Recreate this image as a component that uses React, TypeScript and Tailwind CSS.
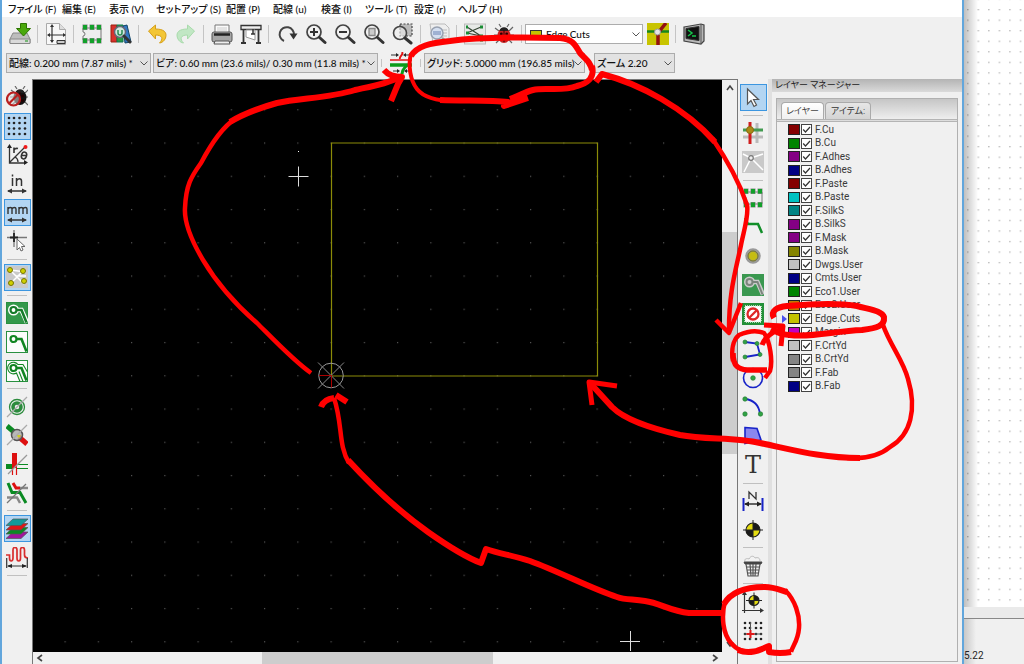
import type { ReactNode } from "react";

const UI_FONT = "font-['Roboto','Noto_Sans_CJK_JP',sans-serif]";
const BAR_FONT = "font-['Lato','Noto_Sans_CJK_JP',sans-serif]";

function Icon({ children }: { children: ReactNode }) {
  return (
    <svg viewBox="0 0 22 22" className="size-[22px] shrink-0" fill="none" stroke="#333" strokeWidth="1.5" aria-hidden="true">
      {children}
    </svg>
  );
}

function Bug({ color = "#c62222" }: { color?: string }) {
  return (
    <g>
      <path d="M2 5l4 3M20 4l-4 4M1 12h4M21 12h-4M3 20l4-4M19 20l-4-4M8 4L6 1M14 4l2-3" stroke="#666" strokeWidth="1.2" />
      <ellipse cx="11" cy="12.500" rx="6.500" ry="7.500" fill={color} stroke="none" />
      <path d="M6.500 8a4.600 4.600 0 0 1 9 0z" fill="#222" stroke="none" />
      <path d="M11 7v12" stroke="#300" strokeWidth="1" />
      <circle cx="8.300" cy="11" r="1.400" fill="#200" stroke="none" />
      <circle cx="13.700" cy="11" r="1.400" fill="#200" stroke="none" />
      <circle cx="8.500" cy="15.500" r="1.400" fill="#200" stroke="none" />
      <circle cx="13.500" cy="15.500" r="1.400" fill="#200" stroke="none" />
    </g>
  );
}

function Lens({ children }: { children?: ReactNode }) {
  return (
    <g>
      <circle cx="9" cy="9" r="7" fill="#f4f4f4" fillOpacity=".6" stroke="#444" strokeWidth="1.700" />
      <path d="M14.500 14.500l5.500 5" stroke="#333" strokeWidth="3" strokeLinecap="round" />
      {children}
    </g>
  );
}

function Module() {
  return (
    <g>
      <path d="M2 5h18v12H2v-4a2 2 0 0 0 0-4z" fill="#eee" stroke="#777" strokeWidth="1" />
      <path d="M4 1.500v5.500M4 15v5.500M11 1.500v5.500M11 15v5.500M18 1.500v5.500M18 15v5.500" stroke="#888" strokeWidth="5" />
      <path d="M4 2v4.500M4 15.500V20M11 2v4.500M11 15.500V20M18 2v4.500M18 15.500V20" stroke="#12a02a" strokeWidth="4" />
    </g>
  );
}

function Target({ x = 11, y = 11, r = 7 }: { x?: number; y?: number; r?: number }) {
  return (
    <g transform={`translate(${x} ${y})`}>
      <circle r={r} fill="#e4dc10" stroke="#222" strokeWidth="1.200" />
      <path d={`M0 0V${-r}A${r} ${r} 0 0 1 ${r} 0zM0 0V${r}A${r} ${r} 0 0 1 ${-r} 0z`} fill="#1a1a1a" stroke="none" />
      <path d={`M0 ${-r - 3}V${r + 3}M${-r - 3} 0H${r + 3}`} stroke="#222" strokeWidth="1" />
    </g>
  );
}

function Net({ children }: { children?: ReactNode }) {
  return (
    <g>
      <rect width="22" height="22" fill="#c9c9c9" stroke="none" />
      {children}
    </g>
  );
}

function ZoneTrack({ filled, outline }: { filled?: boolean; outline?: boolean }) {
  return (
    <g>
      <rect x=".5" y=".5" width="21" height="21" fill={filled ? "#33984a" : "#fcfcfc"} stroke="#299040" strokeWidth="1" />
      {outline && (
        <path d="M14 21.500l-3.500-8.500a5.800 5.800 0 1 1 1.500-8.500h5L21.500 12M17 21.500l-4-10" stroke="#118522" strokeWidth="1.100" />
      )}
      {filled && <path d="M10.500 8h5l5.500 12.500" stroke="#fff" strokeWidth="4.500" />}
      <circle cx="7.500" cy="8" r="3" stroke={filled ? "#fff" : "#118522"} strokeWidth={filled ? 5 : 2.2} fill="#fff" />
      {filled && <circle cx="7.500" cy="8" r="3" stroke="#157c2a" strokeWidth="2.200" fill="#fff" />}
      <path d="M10.500 8h5l5 12.500" stroke={filled ? "#157c2a" : "#118522"} strokeWidth="2.600" />
    </g>
  );
}

function Dots({ xs }: { xs: number[] }) {
  return (
    <g fill="#222" stroke="none">
      {xs.map((y) => xs.map((x) => <circle key={`${x}-${y}`} cx={x} cy={y} r="1.300" />))}
    </g>
  );
}

const icons: Record<string, ReactNode> = {
  save: (
    <>
      <path d="M4 10h14l3 6v4H1v-4z" fill="#bdbdbd" stroke="#888" strokeWidth="1" />
      <path d="M1 16h20v4.500H1z" fill="#dadada" stroke="#888" strokeWidth="1" />
      <path d="M11.500 .5h6v5h4l-7 7.500-7-7.500h4z" fill="#4aa80c" stroke="#2c7400" strokeWidth="1" />
      <path d="M16 18h3" stroke="#5a5" />
    </>
  ),
  page: (
    <>
      <path d="M1.500 .5h13l6 6v15h-19z" fill="#f8f8f8" stroke="#aaa" strokeWidth="1" />
      <path d="M14.500 .5v6h6" fill="#ddd" stroke="#aaa" strokeWidth="1" />
      <path d="M7 3v16M3 12h17" strokeWidth="1.200" />
      <path d="M7 1l2 3H5zM7 20l2-3H5zM2 12l3-2v4zM21 12l-3-2v4z" fill="#333" stroke="none" />
      <path d="M12 17.500h8v3h-8z" strokeWidth="1" fill="#ccc" />
    </>
  ),
  module: <Module />,
  library: (
    <>
      <path d="M1 2h6v17H1z" fill="#d9302c" stroke="#921" strokeWidth="1" />
      <path d="M7 2h6v17H7z" fill="#289a42" stroke="#175" strokeWidth="1" />
      <path d="M13 3l4-1 4 17-6 1z" fill="#3479c4" stroke="#146" strokeWidth="1" />
      <circle cx="10" cy="9" r="5.500" fill="#cfeadf" stroke="#667" />
      <path d="M8 7v3a2 2 0 0 0 4 0V7" stroke="#298a53" />
      <path d="M14 13l6 6" strokeWidth="3" strokeLinecap="round" />
    </>
  ),
  undo: <path d="M2.500 8l7-6v4c8 0 12 3 10 9-1 3-4 5-6 5 4-4 3-8-4-8v4z" fill="#f3c636" stroke="#d59f1b" strokeWidth="1" />,
  redo: <path d="M19.500 8l-7-6v4C4.500 6 .5 9 2.500 15c1 3 4 5 6 5-4-4-3-8 4-8v4z" fill="#c1e7c4" stroke="#a9dbac" strokeWidth="1" />,
  print: (
    <>
      <path d="M4 2h14v9H4z" fill="#fafafa" stroke="#777" strokeWidth="1" />
      <rect x="1" y="9" width="20" height="10" rx="2" fill="#a5a5a5" stroke="#555" strokeWidth="1" />
      <path d="M3 11.500h16" stroke="#222" strokeWidth="2.500" />
      <path d="M4 18h14l1 3H3z" fill="#eee" stroke="#555" strokeWidth="1" />
      <path d="M6 5h10M6 7h10" stroke="#ccc" strokeWidth="1" />
    </>
  ),
  plot: (
    <>
      <path d="M1 2.500h20v4H1z" fill="#eee" strokeWidth="1.300" />
      <path d="M3.500 7v13M18.500 7v13M1 20h5M16 20h5" strokeWidth="1.800" />
      <path d="M6 7h9v10l-9-3z" fill="#fff" stroke="#999" strokeWidth="1" />
      <path d="M13 6v5M11 11h4" strokeWidth="1.500" />
    </>
  ),
  refresh: (
    <>
      <path d="M8 18A7.200 7.200 0 1 1 18 12" stroke="#444" strokeWidth="2" />
      <path d="M13.500 10.500h8l-4 6z" fill="#333" stroke="none" />
    </>
  ),
  zoomIn: <Lens><path d="M5 9h8M9 5v8" strokeWidth="2" /></Lens>,
  zoomOut: <Lens><path d="M5 9h8" strokeWidth="2" /></Lens>,
  zoomFit: <Lens><path d="M6 5.500h6v7H6z" fill="#ccc" stroke="#888" strokeWidth="1.300" /></Lens>,
  zoomArea: (
    <>
      <path d="M8 1h12v12H8z" fill="#bbb" stroke="#444" strokeWidth="1.200" strokeDasharray="2 1.500" />
      <circle cx="8" cy="10" r="6.500" fill="#eee" fillOpacity=".6" stroke="#444" strokeWidth="1.600" />
      <path d="M13 15l6 5" strokeWidth="3" strokeLinecap="round" />
    </>
  ),
  find: (
    <>
      <path d="M2 1h15l4 4v15H5z" fill="#eee" stroke="#bbb" strokeWidth="1" />
      <path d="M14 7h5M15 10h4M15 13h4M7 17h12" stroke="#bbb" strokeWidth="1" />
      <circle cx="9" cy="10" r="6" fill="#d4dff0" stroke="#98a1b0" />
      <path d="M5 9h8M5 11h8" stroke="#6b83b3" strokeWidth="1.200" />
      <path d="M14 15l5 4" stroke="#999" strokeWidth="2.500" />
    </>
  ),
  netlist: (
    <>
      <rect x=".5" y="1" width="21" height="20" fill="#e7e9e7" stroke="#bbb" strokeWidth="1" />
      <path d="M3 4l14 9M3 10L17 4M3 10l14 3M3 17h15" stroke="#343" strokeWidth="1.200" />
      <path d="M2 4h2M16 4h3M2 10h3M16 13h3M2 17h3M16 17h3" stroke="#198c34" strokeWidth="3" />
    </>
  ),
  bug: <Bug />,
  router: (
    <>
      <rect width="22" height="22" fill="#c8c400" stroke="none" />
      <path d="M0 8.500h22" stroke="#16871e" strokeWidth="2.500" />
      <path d="M11 22V10L19 0" stroke="#931111" strokeWidth="3.500" />
      <circle cx="10.500" cy="9" r="3" fill="#e4e4e4" stroke="#999" strokeWidth="1" />
    </>
  ),
  console: (
    <>
      <path d="M1 4l17-3 3 1v16l-3 3-17-3z" fill="#b8b8b8" stroke="#444" strokeWidth="1.200" />
      <path d="M18 1v20" stroke="#555" strokeWidth="1" />
      <path d="M3 5.500l13-2v14l-13-2z" fill="#111" stroke="#333" strokeWidth="1" />
      <path d="M5 7l4 3-4 3M9 13h4" stroke="#17c64b" strokeWidth="1.500" />
    </>
  ),
  autoWidth: (
    <>
      <path d="M0 8h22" stroke="#e01414" strokeWidth="1.500" />
      <path d="M0 13h22" stroke="#0a9c1a" strokeWidth="3.500" />
      <path d="M12 0c2 3-3 4-2 7" stroke="#e01414" strokeWidth="2" />
      <path d="M17 13c-2 3-5 4-5 9" stroke="#0a9c1a" strokeWidth="3" />
      <path d="M1 3h5M21 3h-5M3 19h5M20 19h-4" strokeWidth="1.200" />
      <path d="M9 3L6 1v4zM13 3l3-2v4zM10 19l-3-2v4zM14 19l3-2v4z" fill="#222" stroke="none" />
    </>
  ),
  drcOff: (
    <>
      <g transform="translate(3 -1)"><Bug color="#111" /></g>
      <circle cx="7.500" cy="13" r="6.500" fill="#ddd" fillOpacity=".55" stroke="#b91f1f" strokeWidth="2.200" />
      <path d="M3 17.500l9-9" stroke="#b91f1f" strokeWidth="2.200" />
    </>
  ),
  grid: <Dots xs={[3, 8, 13.5, 19]} />,
  polar: (
    <>
      <path d="M3.500 2v17H20M3.500 18.500L19 3M9 13c2 1 3 3 3 5" strokeWidth="1.300" />
      <path d="M3.500 0L6 4H1zM22 18.500L18 16v5z" fill="#222" stroke="none" />
      <circle cx="19.500" cy="3" r="2" fill="#f01818" stroke="none" />
      <path d="M8 9V3.500M8 6c1-2 2-2 4-1.500" strokeWidth="1.600" />
      <ellipse cx="18" cy="11.500" rx="2.500" ry="3.500" transform="rotate(18 18 11.500)" strokeWidth="1.600" />
      <path d="M15.500 11.500h5" />
    </>
  ),
  inch: (
    <>
      <path d="M6.500 5v8M6.500 1.500v2M10.500 13V5M10.500 8c1-3 5-3 5 0v5" strokeWidth="1.500" />
      <path d="M2 18h18" />
      <path d="M1 18l5-2.500v5zM21 18l-5-2.500v5z" fill="#333" stroke="none" />
    </>
  ),
  mm: (
    <>
      <path d="M2 12V5M2 7c1-2 4-2 4 0v5M6 7c1-2 4-2 4 0v5M13 12V5M13 7c1-2 4-2 4 0v5M17 7c1-2 4-2 4 0v5" strokeWidth="1.400" />
      <path d="M2 18h18" />
      <path d="M1 18l5-2.500v5zM21 18l-5-2.500v5z" fill="#333" stroke="none" />
    </>
  ),
  cursorShape: (
    <>
      <path d="M8 0v17M1 7.500h20" stroke="#777" strokeWidth="1.300" />
      <path d="M8 3v9M4 7.500h8" stroke="#222" strokeWidth="1.800" />
      <path d="M11 9v11l2.500-2.500L15 21l2-1-1.500-3.500H19z" fill="#fff" stroke="#666" strokeWidth="1" />
    </>
  ),
  ratsnest: (
    <Net>
      <path d="M4 4l14 14M5 17L17 5M4 4l16 2M10 10h10" stroke="#fff" />
      <g fill="#d0d000" stroke="#777700" strokeWidth="1">
        <circle cx="4" cy="4" r="2.500" /><circle cx="17" cy="5" r="2.500" /><circle cx="5" cy="17" r="2.500" /><circle cx="18" cy="15" r="2.500" />
      </g>
    </Net>
  ),
  zoneFill: <ZoneTrack filled />,
  zoneNone: <ZoneTrack />,
  zoneOutline: <ZoneTrack outline />,
  viaSketch: (
    <>
      <circle cx="11" cy="11" r="7.500" stroke="#2c8b3d" strokeWidth="1.300" />
      <circle cx="11" cy="11" r="4" stroke="#2c8b3d" strokeWidth="3.500" fill="#eee" />
      <path d="M1 21L21 1" stroke="#aaa" strokeWidth="1.300" />
    </>
  ),
  contrast: (
    <>
      <path d="M1 2l7 6" stroke="#0a8a22" strokeWidth="5" />
      <path d="M13 13l8 7" stroke="#dd1010" strokeWidth="5" />
      <circle cx="11" cy="11" r="5.500" fill="#aaa" fillOpacity=".8" stroke="#555" />
      <path d="M10 11l3 3 2-3z" fill="#cc2" stroke="none" />
      <path d="M1 21L21 1" stroke="#aaa" strokeWidth="1.300" />
    </>
  ),
  trackSketch: (
    <>
      <path d="M0 13.500h8" stroke="#0a8a22" strokeWidth="5" />
      <path d="M8.500 0v15" stroke="#dd1010" strokeWidth="5" />
      <path d="M11 11.500h11M11 15.500h11" stroke="#0a8a22" strokeWidth="1.200" />
      <path d="M6.500 15v7M10.500 15v7" stroke="#dd1010" strokeWidth="1.200" />
      <path d="M2 21L21 2" stroke="#999" strokeWidth="1.200" />
    </>
  ),
  edges: (
    <>
      <path d="M2 1l4 9.500h8L20 21" stroke="#0a8a22" strokeWidth="3" />
      <path d="M7 1l3 5h4" stroke="#dd1010" strokeWidth="3" />
      <path d="M14 6h8M1 15.500h10l3 5.500" stroke="#888" strokeWidth="2.500" />
      <path d="M1 21L20 2" stroke="#777" strokeWidth="1.200" />
    </>
  ),
  layers: (
    <>
      <path d="M7 14h15l-7 6.500H0z" fill="#a0149c" stroke="#555" strokeWidth=".7" />
      <path d="M7 9.500h15l-7 6.500H0z" fill="#0a8a22" stroke="#555" strokeWidth=".7" />
      <path d="M7 5.500h15L15 12H0z" fill="#dd1818" stroke="#555" strokeWidth=".7" />
      <path d="M7 1h15L15 7.500H0z" fill="#139a9a" stroke="#555" strokeWidth=".7" />
    </>
  ),
  microwave: (
    <>
      <path d="M0 8h3.500v3c0 4 3.500 4 3.500 0V3c0-3.500 4-3.500 4 0v8c0 4 3.500 4 3.500 0V3c0-3.500 4-3.500 4 0v5c0 2 1 3 3.500 3" stroke="#d82e2e" strokeWidth="1.700" />
      <path d="M.7 11v10M21.300 11v10M2 19h18" strokeWidth="1.200" />
      <path d="M1 19l5-2v4zM21 19l-5-2v4z" fill="#222" stroke="none" />
    </>
  ),
  select: <path d="M5.500 3v15l3.500-3.500 3 6 2.500-1.500-3-5.500h5z" fill="#fff" stroke="#555" strokeWidth="1.200" />,
  highlight: (
    <>
      <path d="M15 1v20M1 15h20" stroke="#bbb" strokeWidth="3" />
      <path d="M1 8h20" stroke="#429b50" strokeWidth="3" />
      <path d="M8 0v22" stroke="#d01d1d" strokeWidth="3" />
      <circle cx="8" cy="8" r="3.500" fill="#aa8a16" stroke="#8a6a10" strokeWidth="1" />
    </>
  ),
  localRats: (
    <Net>
      <path d="M1 3l8 4L2 21M9 7l12 12M9 7l12-4" stroke="#fff" />
      <circle cx="9" cy="7" r="2.300" fill="#eee" stroke="#777" strokeWidth="1.200" />
    </Net>
  ),
  track: <path d="M3 2l3 6h10l4 9" stroke="#118e28" strokeWidth="2.500" />,
  via: (
    <>
      <circle cx="11" cy="11" r="6" fill="#c5bd13" stroke="#999" strokeWidth="3.500" />
      <circle cx="11" cy="11" r="5" stroke="#777718" strokeWidth="1" />
    </>
  ),
  zone: (
    <>
      <rect width="22" height="22" fill="#3a9850" stroke="none" />
      <path d="M10.500 8h5l5.500 12.500" stroke="#ccc" strokeWidth="4.500" />
      <circle cx="7.500" cy="8" r="3" stroke="#ccc" strokeWidth="5" />
      <circle cx="7.500" cy="8" r="3" fill="#ccc" stroke="#7b857d" strokeWidth="2" />
      <path d="M10.500 8h5l5 12.500" stroke="#7b857d" strokeWidth="2" />
    </>
  ),
  keepout: (
    <>
      <rect width="22" height="22" fill="#239038" stroke="none" />
      <rect x="3" y="3" width="16" height="16" fill="#fff" stroke="#dff0df" strokeWidth="1.500" strokeDasharray="1 1" />
      <circle cx="11" cy="11" r="5.500" stroke="#de2727" strokeWidth="2.300" />
      <path d="M7 15l8-8" stroke="#de2727" strokeWidth="2.300" />
    </>
  ),
  line: (
    <>
      <path d="M3 3l12 1.500 3 11L3 18" stroke="#1723c8" strokeWidth="1.800" />
      <g fill="#2fa344" stroke="#287c36" strokeWidth=".7"><circle cx="3" cy="3" r="2" /><circle cx="15" cy="4.500" r="2" /><circle cx="18" cy="15.500" r="2" /><circle cx="3" cy="18" r="2" /></g>
    </>
  ),
  circle: (
    <>
      <circle cx="11" cy="11" r="9.500" stroke="#1723c8" strokeWidth="1.600" />
      <circle cx="11" cy="11" r="2.300" fill="#2fa344" stroke="#287c36" strokeWidth=".7" />
    </>
  ),
  arc: (
    <>
      <path d="M3 3c9 1 14 7 15 15" stroke="#1723c8" strokeWidth="1.800" />
      <g fill="#2fa344" stroke="#287c36" strokeWidth=".7"><circle cx="3" cy="3" r="2.200" /><circle cx="18.500" cy="18" r="2.200" /><circle cx="3" cy="18" r="2.200" /></g>
    </>
  ),
  polygon: <path d="M3 2.500l12 1 4 11.500-16 3.500z" fill="#8a87ee" stroke="#1723c8" strokeWidth="1.600" />,
  dimension: (
    <>
      <path d="M1.500 8v13M20.500 8v13" stroke="#1723c8" strokeWidth="2" />
      <path d="M3 14h16M7 9V2l7 7V2" strokeWidth="1.300" />
      <path d="M2 14l5-2.500v5zM20 14l-5-2.500v5z" fill="#222" stroke="none" />
    </>
  ),
  target: <Target />,
  trash: (
    <>
      <path d="M3 6c-1-2 2-3 4-2 2-4 5-3 6-1 3-1 5 0 5 3" fill="#f2f2f2" stroke="#bbb" strokeWidth="1" />
      <path d="M2 7h18l-1 2H3z" fill="#444" stroke="#444" strokeWidth="1" />
      <path d="M4 9l2 12h10l2-12M8 9l1 12M11 9v12M14 9l-1 12M4 12h14M5 15h12M5 18h12" stroke="#555" strokeWidth="1.200" />
    </>
  ),
  origin: (
    <>
      <path d="M2.500 2v20M0 19.500h19" strokeWidth="1.200" />
      <path d="M2.500 0L5 4H0zM22 19.500L18 17v5z" fill="#333" stroke="none" />
      <Target x={12} y={9.5} r={5} />
    </>
  ),
  gridOrigin: (
    <>
      <Dots xs={[3, 8, 14, 19]} />
      <path d="M8.500 2v18M2 14h18" stroke="#555" strokeWidth="1" />
      <path d="M8.500 10v8M4.500 14h8" stroke="#e01818" strokeWidth="2" />
    </>
  ),
};

const SEP = "|";
const topTools = ["save", SEP, "page", SEP, "module", "library", SEP, "undo", "redo", SEP, "print", "plot", SEP, "refresh", "zoomIn", "zoomOut", "zoomFit", "zoomArea", SEP, "find", SEP, "netlist", "bug", SEP];
const leftTools = ["drcOff", "grid", "polar", "inch", "mm", "cursorShape", SEP, "ratsnest", SEP, "zoneFill", "zoneNone", "zoneOutline", SEP, "viaSketch", "contrast", "trackSketch", "edges", SEP, "layers", "microwave"];
const rightTools = ["select", SEP, "highlight", "localRats", SEP, "module", "track", "via", "zone", "keepout", SEP, "line", "circle", "arc", "polygon", "text", SEP, "dimension", "target", SEP, "trash", SEP, "origin", "gridOrigin"];
const active = ["grid", "mm", "ratsnest", "layers", "select"];

function ToolButton({ name }: { name: string }) {
  return (
    <button
      type="button"
      aria-label={name}
      className={`grid size-[27px] shrink-0 place-items-center border ${active.includes(name) ? "border-[#3c96e0] bg-[#b3d5f2]" : "border-transparent"}`}
    >
      {name === "text" ? (
        <span className="font-['DejaVu_Serif',serif] text-2xl leading-6 text-[#333]">T</span>
      ) : (
        <Icon>{icons[name]}</Icon>
      )}
    </button>
  );
}

function Divider() {
  return (
    <div className="flex w-[7px] shrink-0 justify-center self-stretch py-2">
      <div className="w-px bg-[#c4c4c4]" />
    </div>
  );
}

function SideTools({ tools, className }: { tools: string[]; className: string }) {
  return (
    <div className={`flex flex-col ${className}`}>
      {tools.map((t, i) =>
        t === SEP ? (
          <div key={i} className="flex h-[7px] w-5 shrink-0 items-center self-center">
            <div className="h-px w-full bg-[#c0c0c0]" />
          </div>
        ) : (
          <div key={i} className="grid min-h-0 flex-1 place-items-center">
            <ToolButton name={t} />
          </div>
        ),
      )}
    </div>
  );
}

function Combo({ label, text, className, light }: { label: string; text: string; className: string; light?: boolean }) {
  return (
    <div className={`grid h-5 shrink-0 items-center ${className}`}>
      <select
        aria-label={label}
        className={`col-start-1 row-start-1 h-full w-full appearance-none truncate border border-[#acacac] ${light ? "bg-white pl-5" : "bg-[#e2e2e2] pl-[2px]"} ${BAR_FONT} text-[10px] leading-4 font-medium text-[#111]`}
      >
        <option>{text}</option>
      </select>
      {light && <span className="pointer-events-none col-start-1 row-start-1 ml-[5px] h-[9px] w-3 border border-[#333] bg-[#c4c400]" />}
      <svg viewBox="0 0 8 5" className="pointer-events-none col-start-1 row-start-1 mr-[3px] h-[5px] w-2 justify-self-end" fill="none" stroke="#555" aria-hidden="true">
        <path d="M.5 .5L4 4 7.500 .5" />
      </svg>
    </div>
  );
}

const menus = [
  { text: "ファイル (F)", width: "w-[54px]" },
  { text: "編集 (E)", width: "w-[47px]" },
  { text: "表示 (V)", width: "w-[47px]" },
  { text: "セットアップ (S)", width: "w-[70px]" },
  { text: "配置 (P)", width: "w-[47px]" },
  { text: "配線 (u)", width: "w-[48px]" },
  { text: "検査 (I)", width: "w-[44px]" },
  { text: "ツール (T)", width: "w-[49px]" },
  { text: "設定 (r)", width: "w-[44px]" },
  { text: "ヘルプ (H)", width: "w-[54px]" },
];

const layers = [
  { name: "F.Cu", color: "bg-[#840000]" },
  { name: "B.Cu", color: "bg-[#008400]" },
  { name: "F.Adhes", color: "bg-[#840084]" },
  { name: "B.Adhes", color: "bg-[#000084]" },
  { name: "F.Paste", color: "bg-[#840000]" },
  { name: "B.Paste", color: "bg-[#00c2c2]" },
  { name: "F.SilkS", color: "bg-[#008484]" },
  { name: "B.SilkS", color: "bg-[#840084]" },
  { name: "F.Mask", color: "bg-[#840084]" },
  { name: "B.Mask", color: "bg-[#848400]" },
  { name: "Dwgs.User", color: "bg-[#c2c2c2]" },
  { name: "Cmts.User", color: "bg-[#000084]" },
  { name: "Eco1.User", color: "bg-[#008400]" },
  { name: "Eco2.User", color: "bg-[#c27a00]" },
  { name: "Edge.Cuts", color: "bg-[#c2c200]" },
  { name: "Margin", color: "bg-[#c200c2]" },
  { name: "F.CrtYd", color: "bg-[#c2c2c2]" },
  { name: "B.CrtYd", color: "bg-[#848484]" },
  { name: "F.Fab", color: "bg-[#848484]" },
  { name: "B.Fab", color: "bg-[#000084]" },
];

function LayerPanel() {
  return (
    <aside className="flex w-[190px] shrink-0 flex-col">
      <h2 className="h-[13px] shrink-0 overflow-hidden bg-linear-to-b from-[#b4b4b4] to-[#dadada] pl-[3px] text-[9px] leading-3 text-[#222]">レイヤー マネージャー</h2>
      <div className="mx-1 mt-[6px] mb-[2px] flex flex-1 flex-col border border-[#b0b0b0]">
        <div role="tablist" className="flex h-5 shrink-0 items-end gap-px bg-linear-to-b from-[#c6c6c6] to-[#eeeeee] pl-1">
          <button type="button" role="tab" aria-selected="true" className="h-[17px] w-[43px] rounded-t-sm border border-b-0 border-[#aaa] bg-linear-to-b from-white to-[#f0f0f0] text-[9px] leading-4 whitespace-nowrap text-[#444]">レイヤー</button>
          <button type="button" role="tab" aria-selected="false" className="h-[17px] w-[46px] rounded-t-sm border border-b-0 border-[#aaa] bg-linear-to-b from-[#e6e6e6] to-[#d4d4d4] text-[9px] leading-4 whitespace-nowrap text-[#333]">アイテム:</button>
        </div>
        <div className="h-[3px] shrink-0 border-y border-[#b4b4b4] bg-[#ddd]" />
        <ul className="mt-px flex h-[270px] flex-col pl-[5px]">
          {layers.map((l) => (
            <li key={l.name} className="flex min-h-0 flex-1 items-center">
              <span className="w-[6px] shrink-0">
                {l.name === "Edge.Cuts" && (
                  <svg viewBox="0 0 5 8" className="h-2 w-[5px]" aria-hidden="true">
                    <path d="M0 0l5 4-5 4z" fill="#4a50f0" />
                  </svg>
                )}
              </span>
              <span className={`mr-px h-[11px] w-3 border border-[#222] ${l.color}`} />
              <label className="flex items-center gap-[3px] text-[10px] leading-3 text-[#3a3a3a]">
                <span className="grid">
                  <input type="checkbox" defaultChecked className="col-start-1 row-start-1 size-[11px] appearance-none border border-[#444] bg-white" />
                  <svg viewBox="0 0 11 11" className="pointer-events-none col-start-1 row-start-1 size-[11px]" fill="none" stroke="#333" strokeWidth="1.200" aria-hidden="true">
                    <path d="M2.200 5.500L4.500 8 9 3" />
                  </svg>
                </span>
                {l.name}
              </label>
            </li>
          ))}
        </ul>
      </div>
    </aside>
  );
}

function Board() {
  return (
    <svg className="block size-full bg-black" role="img" aria-label="board">
      <defs>
        <pattern id="board-grid" width="33.250" height="33.250" x="31.500" y="29.200" patternUnits="userSpaceOnUse">
          <rect width="1.200" height="1.200" fill="#555" />
        </pattern>
      </defs>
      <rect width="100%" height="100%" fill="url(#board-grid)" />
      <g transform="translate(-33 -80)" fill="none">
        <path d="M331.500 143v233h266V143z" stroke="#8b8b08" strokeWidth="1.200" />
        <circle cx="331" cy="375.500" r="12.300" stroke="#999" />
        <path d="M318 362.500l26 26M344 362.500l-26 26" stroke="#888" />
        <path d="M319 375.500h12.500v12" stroke="#a00" />
        <path d="M298.500 166.500v20M288.500 176.500h20M630.500 631v20M620 641.500h20" stroke="#ddd" />
        <path d="M298 151.500h1" stroke="#fff" />
      </g>
    </svg>
  );
}

function Chevron({ d }: { d: string }) {
  return (
    <svg viewBox="0 0 8 8" className="size-2" fill="none" stroke="#444" strokeWidth="1.600" aria-hidden="true">
      <path d={d} />
    </svg>
  );
}

function Markup() {
  return (
    <svg viewBox="0 0 1024 664" preserveAspectRatio="none" className="pointer-events-none absolute inset-0 size-full" fill="none" stroke="#ff0000" strokeWidth="6" strokeLinejoin="round" aria-hidden="true">
      <path d="M411 56C417 46 430 43 450 41C480 37 520 37 560 38C572 39 575 44 580 53C586 60 590 61 592 70" />
      <path d="M411 54C408 65 410 80 417 89C424 98 438 101 455 101" strokeWidth="4" />
      <path d="M592 66C595 78 588 83 577 86C562 92 545 87 533 90C525 92 518 96 510 99M440 100C465 101 490 100 508 102L504 106L528 98" />
      <path d="M596 82L602 74C640 84 685 108 715 142" strokeWidth="6" />
      <path d="M712 138C730 164 741 187 747 205C749 215 744 230 741 245C736 270 729 290 729 330" strokeWidth="4.500" />
      <path d="M716 320L729 333L741 303" strokeWidth="4.500" />
      <path d="M311 373C295 362 276 342 257 323C235 304 215 280 203 260C190 238 184 222 185 208C186 185 191 177 201 163C210 146 221 128 235 119" strokeWidth="4.500" />
      <path d="M230 122C245 113 259 108 277 103C300 98 330 98 355 90C373 86 390 83 402 76" />
      <path d="M384 70Q390 77 402 77L398 84L391 101" strokeWidth="6" />
      <path d="M724 613L689 613C670 611 660 603 645 601C632 599 625 600 617 597C590 588 560 572 530 561C512 555 500 554 486 549L481 563C465 557 445 544 428 532C400 512 370 484 348 460" />
      <path d="M349 463C338 445 343 425 334 398" strokeWidth="4.500" />
      <path d="M321 407Q324 399 334 398M336 395L347 402" strokeWidth="6" />
      <path d="M883 325C890 345 903 360 908 379C917 409 911 435 890 447C878 457 862 459 847 458" strokeWidth="4.500" />
      <path d="M860 458C820 458 790 449 760 443C735 437 705 440 680 435C650 428 625 420 612 407L591 384" strokeWidth="6" />
      <path d="M617 386L589 382L592 405" strokeWidth="5" />
      <path d="M774 318C770 311 777 307 787 306C810 304 840 303 857 306C872 310 882 311 884 317C885 326 877 328 862 330C835 331 810 338 790 335C780 335 775 331 771 329" />
      <path d="M764 325L783 326L781 346M762 345C764 338 770 333 782 328" strokeWidth="5" />
      <path d="M733 361C731 350 733 340 739 335C748 331 757 330 764 333C770 341 773 361 770 371L765 378" strokeWidth="4.500" />
      <path d="M733 353C733 367 739 369 747 370H767" strokeWidth="5.500" />
      <path d="M724 604C731 592 747 587 765 587C774 587 780 590 787 592" />
      <path d="M725 601C721 617 723 634 731 643C738 651 742 651 752 652M785 590C795 600 800 615 799 628C798 641 793 645 791 652" strokeWidth="4.500" />
      <path d="M738 650C750 655 760 650 769 646V652Q780 654 791 652" />
    </svg>
  );
}

function BackWindow() {
  return (
    <div className="flex w-[60px] shrink-0 flex-col bg-[#f0f0f0]">
      <svg className="block min-h-0 w-full flex-1 bg-white" aria-hidden="true">
        <defs>
          <pattern id="sheet-grid" width="10.540" height="10.540" x="3" y="9" patternUnits="userSpaceOnUse">
            <rect width="1.500" height="1.300" fill="#bbb" />
          </pattern>
          <linearGradient id="shade">
            <stop stopColor="#000" stopOpacity=".25" />
            <stop offset="1" stopColor="#000" stopOpacity="0" />
          </linearGradient>
        </defs>
        <rect width="100%" height="100%" fill="url(#sheet-grid)" />
        <rect width="14" height="100%" fill="url(#shade)" />
      </svg>
      <div className="h-3 border-b border-[#888] bg-[#eaeaea]" />
      <div className="flex h-[45px] items-end bg-linear-to-r from-[#c8c8c8] to-[#f0f0f0] to-20% text-[10px] leading-4 text-[#222]">5.22</div>
    </div>
  );
}

export default function App() {
  return (
    <div className={`relative flex h-screen min-h-[600px] overflow-hidden ${UI_FONT} [font-feature-settings:'palt']`}>
      <div className="flex min-w-0 flex-1 flex-col border-x-2 border-[#62a6dc] bg-[#f0f0f0]">
        <nav className="flex h-[17px] shrink-0 items-end bg-white pl-[6px]">
          {menus.map((m) => (
            <button key={m.text} type="button" className={`shrink-0 text-left ${BAR_FONT} text-[10px] leading-4 font-medium whitespace-nowrap text-[#111] ${m.width}`}>{m.text}</button>
          ))}
        </nav>
        <div className="flex h-[34px] shrink-0 items-center pl-[3px]">
          {topTools.map((t, i) =>
            t === SEP ? <Divider key={i} /> : <div key={i} className="grid w-[29px] shrink-0 place-items-center"><ToolButton name={t} /></div>,
          )}
          <Combo label="レイヤー" text="Edge.Cuts" className="w-[118px]" light />
          <div className="grid w-[29px] shrink-0 place-items-center"><ToolButton name="router" /></div>
          <Divider />
          <div className="grid w-[29px] shrink-0 place-items-center"><ToolButton name="console" /></div>
        </div>
        <div className="flex h-7 shrink-0 items-center pb-1 pl-1">
          <Combo label="配線" text="配線: 0.200 mm (7.87 mils) *" className="w-[145px]" />
          <Combo label="ビア" text="ビア: 0.60 mm (23.6 mils)/ 0.30 mm (11.8 mils) *" className="ml-[2px] w-[225px]" />
          <div className="flex w-[46px] shrink-0 items-center justify-between self-stretch">
            <Divider />
            <ToolButton name="autoWidth" />
            <Divider />
          </div>
          <Combo label="グリッド" text="グリッド: 5.0000 mm (196.85 mils)" className="w-[161px]" />
          <div className="flex w-[9px] shrink-0 justify-center self-stretch"><Divider /></div>
          <Combo label="ズーム" text="ズーム 2.20" className="w-[81px]" />
        </div>
        <div className="flex min-h-0 flex-1">
          <div className="w-[30px] shrink-0 pt-1">
            <SideTools tools={leftTools} className="h-[489px]" />
            <div className="mx-[5px] mt-[3px] h-px bg-[#c0c0c0]" />
          </div>
          <div className="flex min-w-0 flex-1 flex-col border-t border-r border-l border-[#777]">
            <div className="flex min-h-0 flex-1">
              <div className="min-w-0 flex-1"><Board /></div>
              <div className="flex w-[15px] shrink-0 flex-col items-center bg-[#f0f0f0] py-1">
                <Chevron d="M1 6l3-4 3 4" />
                <div className="min-h-0 flex-[3]" />
                <div className="h-[222px] w-full bg-[#cdcdcd]" />
                <div className="min-h-0 flex-[4]" />
                <Chevron d="M1 2l3 4 3-4" />
              </div>
            </div>
            <div className="flex h-3 shrink-0 items-center justify-between bg-[#f0f0f0] pr-[18px] pl-[3px]">
              <Chevron d="M6 1L2 4l4 3" />
              <div className="h-full w-[231px] bg-[#cdcdcd]" />
              <Chevron d="M2 1l4 3-4 3" />
            </div>
          </div>
          <div className="w-[30px] shrink-0 pt-1">
            <SideTools tools={rightTools} className="h-[562px]" />
          </div>
          <div className="w-1 shrink-0 bg-[#e0e0e0]" />
          <LayerPanel />
        </div>
      </div>
      <BackWindow />
      <Markup />
    </div>
  );
}
